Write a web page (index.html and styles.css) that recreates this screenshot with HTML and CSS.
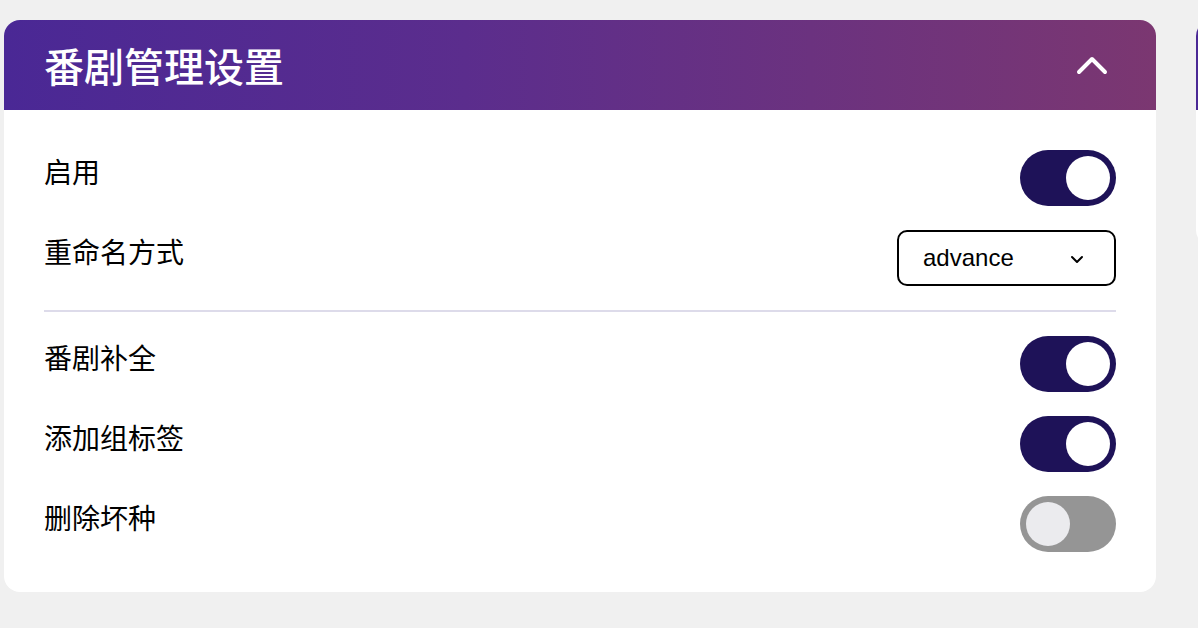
FILE: index.html
```html
<!DOCTYPE html>
<html lang="zh-CN">
<head>
	<meta charset="UTF-8">
	<title>番剧管理设置</title>
	<link rel="stylesheet" href="styles.css">
</head>
<body>
	<div class="board">
		<div class="card">
			<div class="card-head">
				<div class="card-title">番剧管理设置</div>
				<svg class="fold" width="32" height="20" viewBox="0 0 32 20">
					<path d="M3 17 L16 4 L29 17" fill="none" stroke="#fff" stroke-width="4" stroke-linecap="round" stroke-linejoin="round"/>
				</svg>
			</div>
			<div class="card-body">
				<div class="row">
					<div class="label">启用</div>
					<div class="toggle on"><div class="knob"></div></div>
				</div>
				<div class="row">
					<div class="label">重命名方式</div>
					<div class="select">
						<span>advance</span>
						<svg width="14" height="9" viewBox="0 0 14 9">
							<path d="M2 2 L7 7 L12 2" fill="none" stroke="#000" stroke-width="2" stroke-linecap="round" stroke-linejoin="round"/>
						</svg>
					</div>
				</div>
				<div class="divider"></div>
				<div class="row">
					<div class="label">番剧补全</div>
					<div class="toggle on"><div class="knob"></div></div>
				</div>
				<div class="row">
					<div class="label">添加组标签</div>
					<div class="toggle on"><div class="knob"></div></div>
				</div>
				<div class="row">
					<div class="label">删除坏种</div>
					<div class="toggle off"><div class="knob"></div></div>
				</div>
			</div>
		</div>
		<div class="card">
			<div class="card-head"></div>
			<div class="card-body">
				<div class="row"></div>
			</div>
		</div>
	</div>
</body>
</html>
```

FILE: styles.css
```css
html, body {
	margin: 0;
	height: 100%;
}
body {
	background: #f0f0f0;
	overflow: hidden;
	font-family: "Liberation Sans", "Noto Sans CJK SC", sans-serif;
	color: #000;
}
.board {
	display: flex;
	align-items: flex-start;
	gap: 40px;
	padding: 20px 0 0 4px;
	overflow: hidden;
}
.card {
	flex: 0 0 1152px;
	background: #fff;
	border-radius: 16px;
	overflow: hidden;
}
.card-head {
	height: 90px;
	padding: 0 40px;
	display: flex;
	align-items: center;
	justify-content: space-between;
	background: linear-gradient(to right, #4a2895, #5b2d8d 40%, #7b3771);
}
.card-title {
	color: #fff;
	font-size: 40px;
	font-weight: 500;
	line-height: 56px;
	font-family: "Noto Sans CJK SC", sans-serif;
}
.fold {
	margin-right: 8px;
}
.card-body {
	padding: 40px;
	display: flex;
	flex-direction: column;
	gap: 24px;
}
.row {
	height: 56px;
	display: flex;
	align-items: flex-start;
	justify-content: space-between;
}
.label {
	font-size: 28px;
	line-height: 42px;
	font-family: "Noto Sans CJK SC", sans-serif;
}
.toggle {
	width: 96px;
	height: 56px;
	box-sizing: border-box;
	border-radius: 28px;
	padding: 0 6px;
	display: flex;
	align-items: center;
}
.toggle.on {
	background: #1e1258;
	justify-content: flex-end;
}
.toggle.off {
	background: #959595;
	justify-content: flex-start;
}
.knob {
	width: 44px;
	height: 44px;
	border-radius: 50%;
	background: #fff;
}
.toggle.off .knob {
	background: #ebebee;
}
.select {
	width: 219px;
	height: 56px;
	box-sizing: border-box;
	border: 2px solid #000;
	border-radius: 10px;
	padding: 0 30px 0 24px;
	display: flex;
	align-items: center;
	justify-content: space-between;
	font-size: 24px;
}
.select svg {
	margin-top: 2px;
}
.divider {
	height: 2px;
	background: #dddbea;
}
```
